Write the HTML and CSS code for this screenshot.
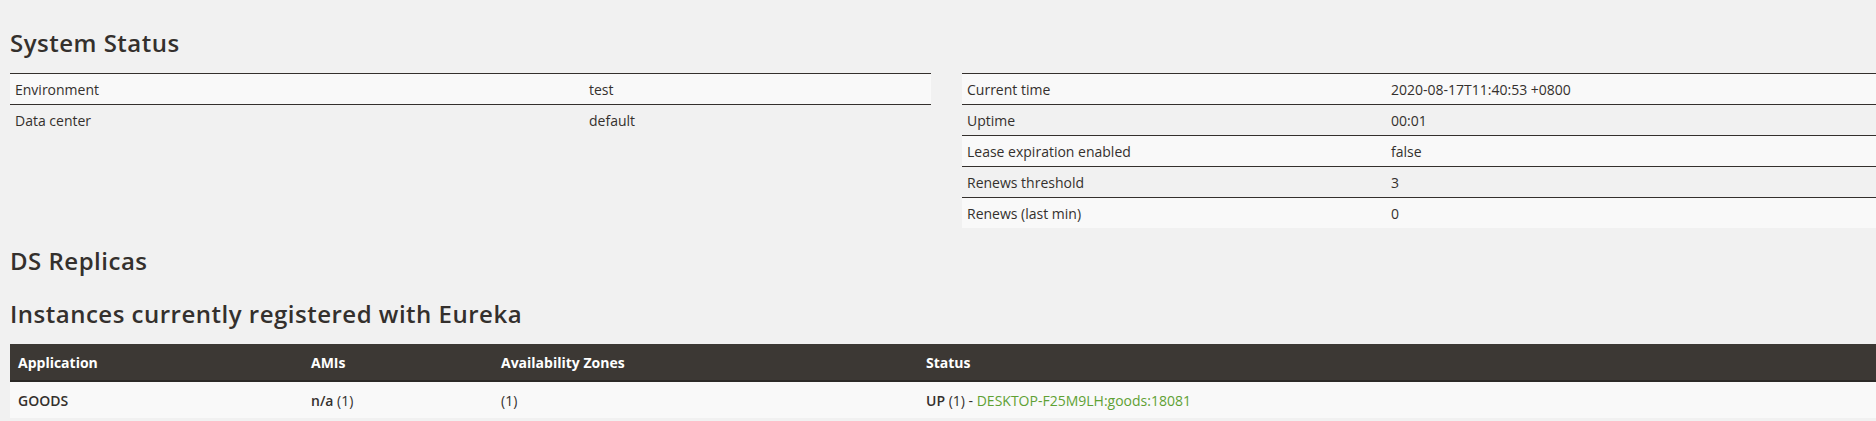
FILE: index.html
```html
<!DOCTYPE html>
<html>
<head>
<meta charset="utf-8">
<title>Eureka</title>
<link rel="stylesheet" href="styles.css">
</head>
<body>
<div class="page">
  <h2 class="title first">System Status</h2>
  <div class="status-row">
    <table class="kv kv-left">
      <tr class="odd"><td class="k">Environment</td><td>test</td></tr>
      <tr><td class="k">Data center</td><td>default</td></tr>
    </table>
    <table class="kv kv-right">
      <tr class="odd"><td class="k">Current time</td><td>2020-08-17T11:40:53 +0800</td></tr>
      <tr><td class="k">Uptime</td><td>00:01</td></tr>
      <tr class="odd"><td class="k">Lease expiration enabled</td><td>false</td></tr>
      <tr><td class="k">Renews threshold</td><td>3</td></tr>
      <tr class="odd"><td class="k">Renews (last min)</td><td>0</td></tr>
    </table>
  </div>
  <h2 class="title replicas">DS Replicas</h2>
  <h2 class="title instances-title">Instances currently registered with Eureka</h2>
  <table class="instances">
    <thead>
      <tr><th class="c-app">Application</th><th class="c-ami">AMIs</th><th class="c-az">Availability Zones</th><th>Status</th></tr>
    </thead>
    <tbody>
      <tr><td><b>GOODS</b></td><td><b>n/a</b> (1)</td><td>(1)</td><td><b>UP</b> (1) - <a href="#">DESKTOP-F25M9LH:goods:18081</a></td></tr>
    </tbody>
  </table>
</div>
</body>
</html>
```
FILE: styles.css
```css
html, body {
  margin: 0;
  padding: 0;
  background: #f1f1f1;
  overflow: hidden;
}
body {
  font-family: "Open Sans", "Liberation Sans", sans-serif;
  font-size: 14px;
  color: #34302d;
}
.page {
  padding: 0 10px;
  width: 1873px;
}
.title {
  font-family: "Open Sans", "Liberation Sans", sans-serif;
  font-weight: 600;
  font-size: 24px;
  letter-spacing: 0.5px;
  line-height: 26px;
  margin: 0;
  color: #34302d;
}
.first { padding-top: 30px; }
.status-row {
  display: grid;
  grid-template-columns: 921px 921px;
  column-gap: 31px;
  align-items: start;
  margin-top: 17px;
}
.kv {
  border-collapse: collapse;
  width: 100%;
}
.kv td {
  height: 30px;
  padding: 0 5px;
  border-top: 1px solid #34302d;
  vertical-align: middle;
  white-space: nowrap;
}
.kv tr.odd td { background: #f9f9f9; }
.kv-left td.k { width: 564px; }
.kv-right td.k { width: 414px; }
.replicas { margin-top: 20px; }
.instances-title { margin-top: 27px; }
.instances {
  border-collapse: collapse;
  width: 100%;
  margin-top: 17px;
}
.instances th {
  background: #3c3834;
  color: #ffffff;
  font-weight: 700;
  text-align: left;
  height: 36px;
  padding: 0 8px;
  border-bottom: 2px solid #2c2a27;
}
.instances td {
  background: #f9f9f9;
  height: 36px;
  padding: 0 8px;
}
.instances td b { font-weight: 600; }
.c-app { width: 277px; }
.c-ami { width: 174px; }
.c-az { width: 409px; }
.instances a {
  color: #5fa134;
  text-decoration: none;
}
```
